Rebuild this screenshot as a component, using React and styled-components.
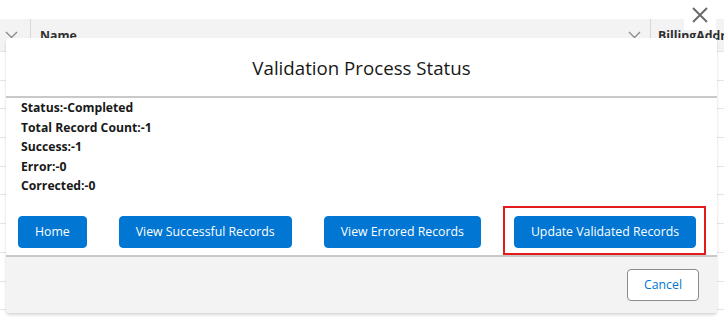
import React from 'react';
import styled, { createGlobalStyle } from 'styled-components';

const GlobalStyle = createGlobalStyle`
    html, body {
        margin: 0;
        padding: 0;
        background: #ffffff;
        font-family: "Open Sans", "Noto Sans", sans-serif;
        color: #181818;
    }
    * {
        box-sizing: border-box;
    }
`;

const Page = styled.div`
    position: relative;
    width: 724px;
    height: 320px;
    overflow: hidden;
    padding-top: 19px;
`;

const Table = styled.div`
    width: 100%;
`;

const HeaderRow = styled.div`
    display: flex;
    height: 33px;
    background: #f3f3f3;
    border-bottom: 1px solid #e5e5e5;
`;

const HeaderCell = styled.div`
    display: flex;
    align-items: center;
    width: ${(props) => props.width || 'auto'};
    flex: ${(props) => props.grow ? 1 : 'none'};
    padding: 0 ${(props) => props.pad || '8px'};
    border-right: ${(props) => props.divider ? '1px solid #d8d8d8' : 'none'};
    font-size: 12.3px;
    font-weight: 700;
    color: #2e2e2e;
    white-space: nowrap;
    overflow: hidden;
`;

const CellLabel = styled.span`
    flex: 1;
`;

const Row = styled.div`
    height: 28.7px;
    border-bottom: 1px solid #e5e5e5;
`;

const Chevron = () => (
    <svg width="13" height="8" viewBox="0 0 13 8">
        <path d="M1 1 L6.5 6.5 L12 1" fill="none" stroke="#8a8a8a" strokeWidth="1.3" />
    </svg>
);

const Modal = styled.div`
    position: absolute;
    top: 38px;
    left: 6px;
    width: 711px;
    background: #ffffff;
    border-radius: 4px;
    box-shadow: 0 2px 3px rgba(0, 0, 0, 0.16);
`;

const ModalHeader = styled.div`
    display: flex;
    align-items: center;
    justify-content: center;
    height: 60px;
    border-bottom: 2px solid #c9c9c9;
    font-size: 18.7px;
    font-weight: 400;
    color: #181818;
`;

const ModalBody = styled.div`
    padding: 0 0 0 12px;
`;

const StatusList = styled.div`
    padding-left: 3px;
    font-size: 12.2px;
    font-weight: 700;
    line-height: 19.5px;
    color: #181818;
`;

const Actions = styled.div`
    display: flex;
    align-items: flex-start;
    gap: 32px;
    margin-top: 20px;
`;

const Button = styled.button`
    height: 32px;
    padding: 0 16px;
    border-radius: 4px;
    border: 1px solid ${(props) => props.neutral ? '#8c8c8c' : '#0176d3'};
    background: ${(props) => props.neutral ? '#ffffff' : '#0176d3'};
    color: ${(props) => props.neutral ? '#0176d3' : '#ffffff'};
    font-family: inherit;
    font-size: 12.3px;
    white-space: nowrap;
    cursor: pointer;
`;

const Highlight = styled.div`
    margin-top: -10px;
    margin-left: -10px;
    padding: 8px 8px 5px 9px;
    border: 2px solid #e31b1b;
`;

const ModalFooter = styled.div`
    display: flex;
    justify-content: flex-end;
    padding: 12px 18px 12px 0;
    background: #f3f3f3;
    border-top: 2px solid #c9c9c9;
    border-radius: 0 0 4px 4px;
`;

const CloseButton = styled.button`
    position: absolute;
    top: 0;
    right: 8px;
    width: 32px;
    height: 30px;
    display: flex;
    align-items: center;
    justify-content: center;
    padding: 0;
    border: none;
    background: #ffffff;
    cursor: pointer;
`;

const stats = [
    ['Status', 'Completed'],
    ['Total Record Count', '1'],
    ['Success', '1'],
    ['Error', '0'],
    ['Corrected', '0'],
];

export default function App() {
    return (
        <Page>
            <GlobalStyle />
            <Table>
                <HeaderRow>
                    <HeaderCell width="31px" pad="5px" divider><Chevron /></HeaderCell>
                    <HeaderCell grow divider pad="9px">
                        <CellLabel>Name</CellLabel>
                        <Chevron />
                    </HeaderCell>
                    <HeaderCell width="73px" pad="7px">BillingAddress</HeaderCell>
                </HeaderRow>
                {Array.from({ length: 10 }).map((_, i) => <Row key={i} />)}
            </Table>

            <CloseButton aria-label="Close">
                <svg width="18" height="18" viewBox="0 0 18 18">
                    <path d="M2 2 L16 16 M16 2 L2 16" stroke="#6b6b6b" strokeWidth="2" />
                </svg>
            </CloseButton>

            <Modal>
                <ModalHeader>Validation Process Status</ModalHeader>
                <ModalBody>
                    <StatusList>
                        {stats.map(([label, value]) => (
                            <div key={label}>{label}:-{value}</div>
                        ))}
                    </StatusList>
                    <Actions>
                        <Button>Home</Button>
                        <Button>View Successful Records</Button>
                        <Button>View Errored Records</Button>
                        <Highlight>
                            <Button>Update Validated Records</Button>
                        </Highlight>
                    </Actions>
                </ModalBody>
                <ModalFooter>
                    <Button neutral>Cancel</Button>
                </ModalFooter>
            </Modal>
        </Page>
    );
}
